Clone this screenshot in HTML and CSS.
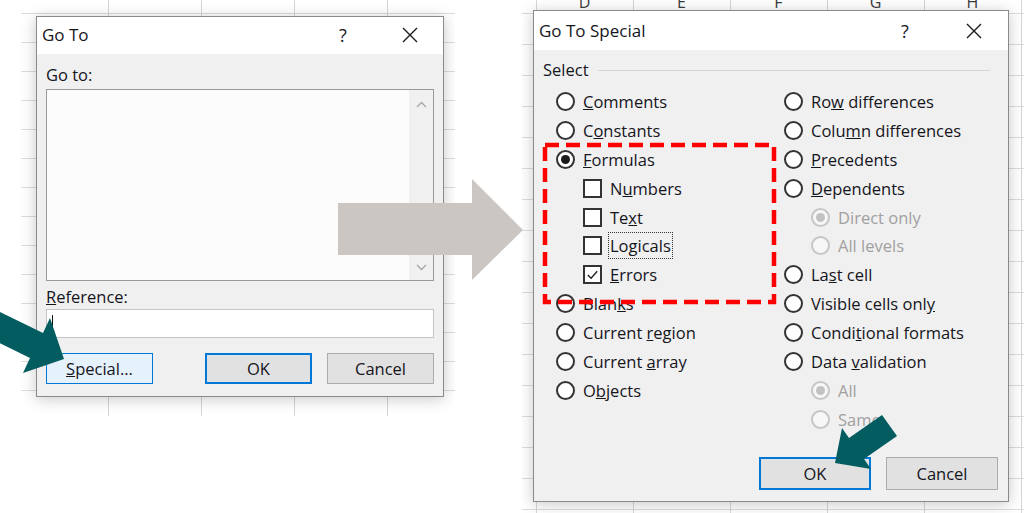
FILE: index.html
```html
<!DOCTYPE html>
<html lang="en">
<head>
    <meta charset="UTF-8">
    <title>Go To Special</title>
    <link rel="stylesheet" href="styles.css">
</head>
<body>
    <div class="canvas">

        <!-- first screenshot: Go To dialog -->
        <div class="shot shot-left">
            <div class="dialog goto">
                <div class="titlebar">
                    <span class="title">Go To</span>
                    <span class="help">?</span>
                    <span class="close">
                        <svg width="16" height="16" viewBox="0 0 16 16"><path d="M1 1 L15 15 M15 1 L1 15" stroke="#1a1a1a" stroke-width="1.4" fill="none"/></svg>
                    </span>
                </div>
                <div class="body">
                    <div class="label">Go to:</div>
                    <div class="listbox">
                        <div class="scrollbar">
                            <svg width="11" height="7" viewBox="0 0 11 7"><polyline points="1,6 5.5,1.5 10,6" stroke="#a6a6a6" stroke-width="1.3" fill="none"/></svg>
                            <svg width="11" height="7" viewBox="0 0 11 7"><polyline points="1,1 5.5,5.5 10,1" stroke="#a6a6a6" stroke-width="1.3" fill="none"/></svg>
                        </div>
                    </div>
                    <div class="label label-ref"><u>R</u>eference:</div>
                    <div class="textbox"><span class="caret"></span></div>
                    <div class="buttons">
                        <button class="btn btn-hot"><u>S</u>pecial...</button>
                        <span class="spacer"></span>
                        <button class="btn btn-default">OK</button>
                        <button class="btn">Cancel</button>
                    </div>
                </div>
            </div>
        </div>

        <!-- second screenshot: Go To Special dialog -->
        <div class="shot shot-right">
            <div class="col-heads">
                <span>D</span><span>E</span><span>F</span><span>G</span><span>H</span>
            </div>
            <div class="dialog special">
                <div class="titlebar">
                    <span class="title">Go To Special</span>
                    <span class="help">?</span>
                    <span class="close">
                        <svg width="16" height="16" viewBox="0 0 16 16"><path d="M1 1 L15 15 M15 1 L1 15" stroke="#1a1a1a" stroke-width="1.4" fill="none"/></svg>
                    </span>
                </div>
                <div class="body">
                    <div class="group-title"><span>Select</span><span class="rule"></span></div>
                    <div class="options">
                        <div class="column">
                            <div class="row"><span class="radio"></span><span><u>C</u>omments</span></div>
                            <div class="row"><span class="radio"></span><span>C<u>o</u>nstants</span></div>
                            <div class="row"><span class="radio checked"></span><span><u>F</u>ormulas</span></div>
                            <div class="row sub"><span class="check"></span><span>N<u>u</u>mbers</span></div>
                            <div class="row sub"><span class="check"></span><span>Te<u>x</u>t</span></div>
                            <div class="row sub"><span class="check"></span><span class="focus">Lo<u>g</u>icals</span></div>
                            <div class="row sub"><span class="check"><svg width="16" height="16" viewBox="0 0 16 16"><polyline points="3,8 6.5,11.5 13,4" stroke="#222" stroke-width="1.5" fill="none"/></svg></span><span><u>E</u>rrors</span></div>
                            <div class="row"><span class="radio"></span><span>Blan<u>k</u>s</span></div>
                            <div class="row"><span class="radio"></span><span>Current <u>r</u>egion</span></div>
                            <div class="row"><span class="radio"></span><span>Current <u>a</u>rray</span></div>
                            <div class="row"><span class="radio"></span><span>O<u>b</u>jects</span></div>
                        </div>
                        <div class="column">
                            <div class="row"><span class="radio"></span><span>Ro<u>w</u> differences</span></div>
                            <div class="row"><span class="radio"></span><span>Colu<u>m</u>n differences</span></div>
                            <div class="row"><span class="radio"></span><span><u>P</u>recedents</span></div>
                            <div class="row"><span class="radio"></span><span><u>D</u>ependents</span></div>
                            <div class="row sub disabled"><span class="radio checked"></span><span>Direct only</span></div>
                            <div class="row sub disabled"><span class="radio"></span><span>All levels</span></div>
                            <div class="row"><span class="radio"></span><span>La<u>s</u>t cell</span></div>
                            <div class="row"><span class="radio"></span><span>Visible cells onl<u>y</u></span></div>
                            <div class="row"><span class="radio"></span><span>Condi<u>t</u>ional formats</span></div>
                            <div class="row"><span class="radio"></span><span>Data <u>v</u>alidation</span></div>
                            <div class="row sub disabled"><span class="radio checked"></span><span>All</span></div>
                            <div class="row sub disabled"><span class="radio"></span><span>Same</span></div>
                        </div>
                    </div>
                    <div class="buttons">
                        <span class="spacer"></span>
                        <button class="btn btn-default">OK</button>
                        <button class="btn">Cancel</button>
                    </div>
                </div>
            </div>
        </div>

        <!-- annotations drawn over the screenshots -->
        <svg class="big-arrow" width="186" height="102" viewBox="0 0 186 102">
            <polygon points="0,24 134,24 134,0 185,51 134,101 134,76 0,76" fill="#cbc6c2"/>
        </svg>

        <svg class="highlight" width="236" height="164" viewBox="0 0 236 164">
            <rect x="3" y="3" width="229" height="157" fill="none" stroke="#ff0000" stroke-width="4.5" stroke-dasharray="14 7"/>
        </svg>

        <svg class="pointers" width="1024" height="513" viewBox="0 0 1024 513">
            <polygon points="-2,311 43,333 50,318 64,359 23,373 30,358 -15,336" fill="#035c60"/>
            <polygon points="897,436 864,459 871,469 835,463 842,428 849,438 882,415" fill="#035c60"/>
        </svg>
    </div>
</body>
</html>
```

FILE: styles.css
```css
body {
    margin: 0;
    background: #fff;
    font-family: "Open Sans", "Noto Sans", sans-serif;
    color: #15151c;
}
.canvas {
    position: relative;
    width: 1024px;
    height: 513px;
    overflow: hidden;
    background: #fff;
}

/* spreadsheet behind the dialogs */
.shot {
    position: absolute;
    top: 0;
    overflow: hidden;
    background-color: #fff;
    background-image:
        linear-gradient(to right, #d6d6d6 1px, transparent 1px),
        linear-gradient(to bottom, #dcdcdc 1px, transparent 1px);
}
.shot-left {
    left: 21px;
    width: 434px;
    height: 416px;
    background-size: 93px 29px;
    background-position: 87px 13px;
}
.shot-right {
    left: 522px;
    width: 502px;
    height: 513px;
    background-size: 97px 31px;
    background-position: 14px 13px;
}
.col-heads {
    display: flex;
    height: 10px;
    padding-left: 14px;
    overflow: hidden;
}
.col-heads span {
    width: 97px;
    text-align: center;
    font-size: 16px;
    line-height: 16px;
    margin-top: -6px;
    color: #3a3a3a;
}

/* dialog frame */
.dialog {
    box-sizing: border-box;
    display: flex;
    flex-direction: column;
    background: #f0f0f0;
    border: 1px solid #8a8a8a;
    box-shadow: 0 2px 14px rgba(0,0,0,0.22);
}
.goto {
    margin: 16px 0 0 15px;
    width: 408px;
    height: 381px;
}
.special {
    margin-left: 11px;
    width: 476px;
    height: 492px;
}
.titlebar {
    display: flex;
    align-items: center;
    background: #fff;
    padding: 0 10px 0 5px;
    font-size: 17px;
    font-weight: 500;
}
.goto .titlebar { height: 37px; padding-bottom: 2px; box-sizing: border-box; }
.special .titlebar { height: 39px; padding-right: 11px; }
.titlebar .title { flex: 1; }
.titlebar .help {
    width: 40px;
    text-align: center;
    margin-right: 24px;
    font-size: 18px;
}
.special .titlebar .help { margin-right: 26px; }
.titlebar .close {
    width: 46px;
    display: flex;
    justify-content: center;
}

.body {
    flex: 1;
    display: flex;
    flex-direction: column;
    font-size: 16.5px;
    font-weight: 500;
}
.goto .body { padding: 11px 9px 12px 9px; }
.special .body { padding: 10px 10px 11px 9px; }

.label { line-height: 20px; }
.label-ref { margin-top: 6px; }
.listbox {
    margin-top: 4px;
    height: 192px;
    box-sizing: border-box;
    border: 1px solid #9a9a9a;
    background: #fcfcfc;
    display: flex;
    justify-content: flex-end;
}
.scrollbar {
    width: 24px;
    background: #f0f0f0;
    display: flex;
    flex-direction: column;
    justify-content: space-between;
    align-items: center;
    padding: 11px 0 9px;
}
.textbox {
    margin-top: 2px;
    height: 29px;
    box-sizing: border-box;
    border: 1px solid #c4c4c4;
    background: #fff;
    padding: 5px 5px;
}
.caret {
    display: block;
    width: 1px;
    height: 18px;
    background: #111;
}

.buttons {
    display: flex;
    gap: 15px;
    margin-top: auto;
}
.spacer { flex: 1; }
.btn {
    box-sizing: border-box;
    width: 107px;
    height: 31px;
    font-family: "Open Sans", "Noto Sans", sans-serif;
    font-size: 16.5px;
    font-weight: 500;
    color: #15151c;
    background: #e1e1e1;
    border: 1px solid #adadad;
    padding: 0;
}
.special .btn { width: 112px; height: 33px; }
.btn-default { border: 2px solid #0078d7; }
.btn-hot {
    background: #e5f1fb;
    border: 1px solid #0078d7;
}

/* Go To Special options */
.group-title {
    display: flex;
    align-items: center;
    line-height: 20px;
    gap: 9px;
}
.group-title .rule {
    flex: 1;
    height: 1px;
    background: #d5d5d5;
    margin-right: 8px;
}
.options {
    display: grid;
    grid-template-columns: 228px 1fr;
    padding-left: 13px;
    margin-top: 7px;
}
.row {
    display: flex;
    align-items: center;
    height: 28.9px;
    gap: 8px;
    white-space: nowrap;
}
.row.sub { padding-left: 27px; }
.radio {
    box-sizing: border-box;
    width: 19px;
    height: 19px;
    border: 2px solid #333;
    border-radius: 50%;
    background: #fff;
    display: flex;
    align-items: center;
    justify-content: center;
    flex-shrink: 0;
}
.radio.checked::after {
    content: "";
    width: 9px;
    height: 9px;
    border-radius: 50%;
    background: #1b1b1b;
}
.check {
    box-sizing: border-box;
    width: 19px;
    height: 19px;
    border: 2px solid #333;
    background: #fff;
    display: flex;
    align-items: center;
    justify-content: center;
    flex-shrink: 0;
}
.focus {
    outline: 1px dotted #333;
    outline-offset: 1px;
}
.disabled { color: #a0a0a0; }
.disabled .radio {
    border-color: #c6c6c6;
    background: #f7f7f7;
}
.disabled .radio.checked::after { background: #c2c2c2; }
.special .buttons { margin-top: auto; }

/* annotations */
.big-arrow {
    position: absolute;
    left: 338px;
    top: 179px;
}
.highlight {
    position: absolute;
    left: 542px;
    top: 142px;
}
.pointers {
    position: absolute;
    left: 0;
    top: 0;
}
```
